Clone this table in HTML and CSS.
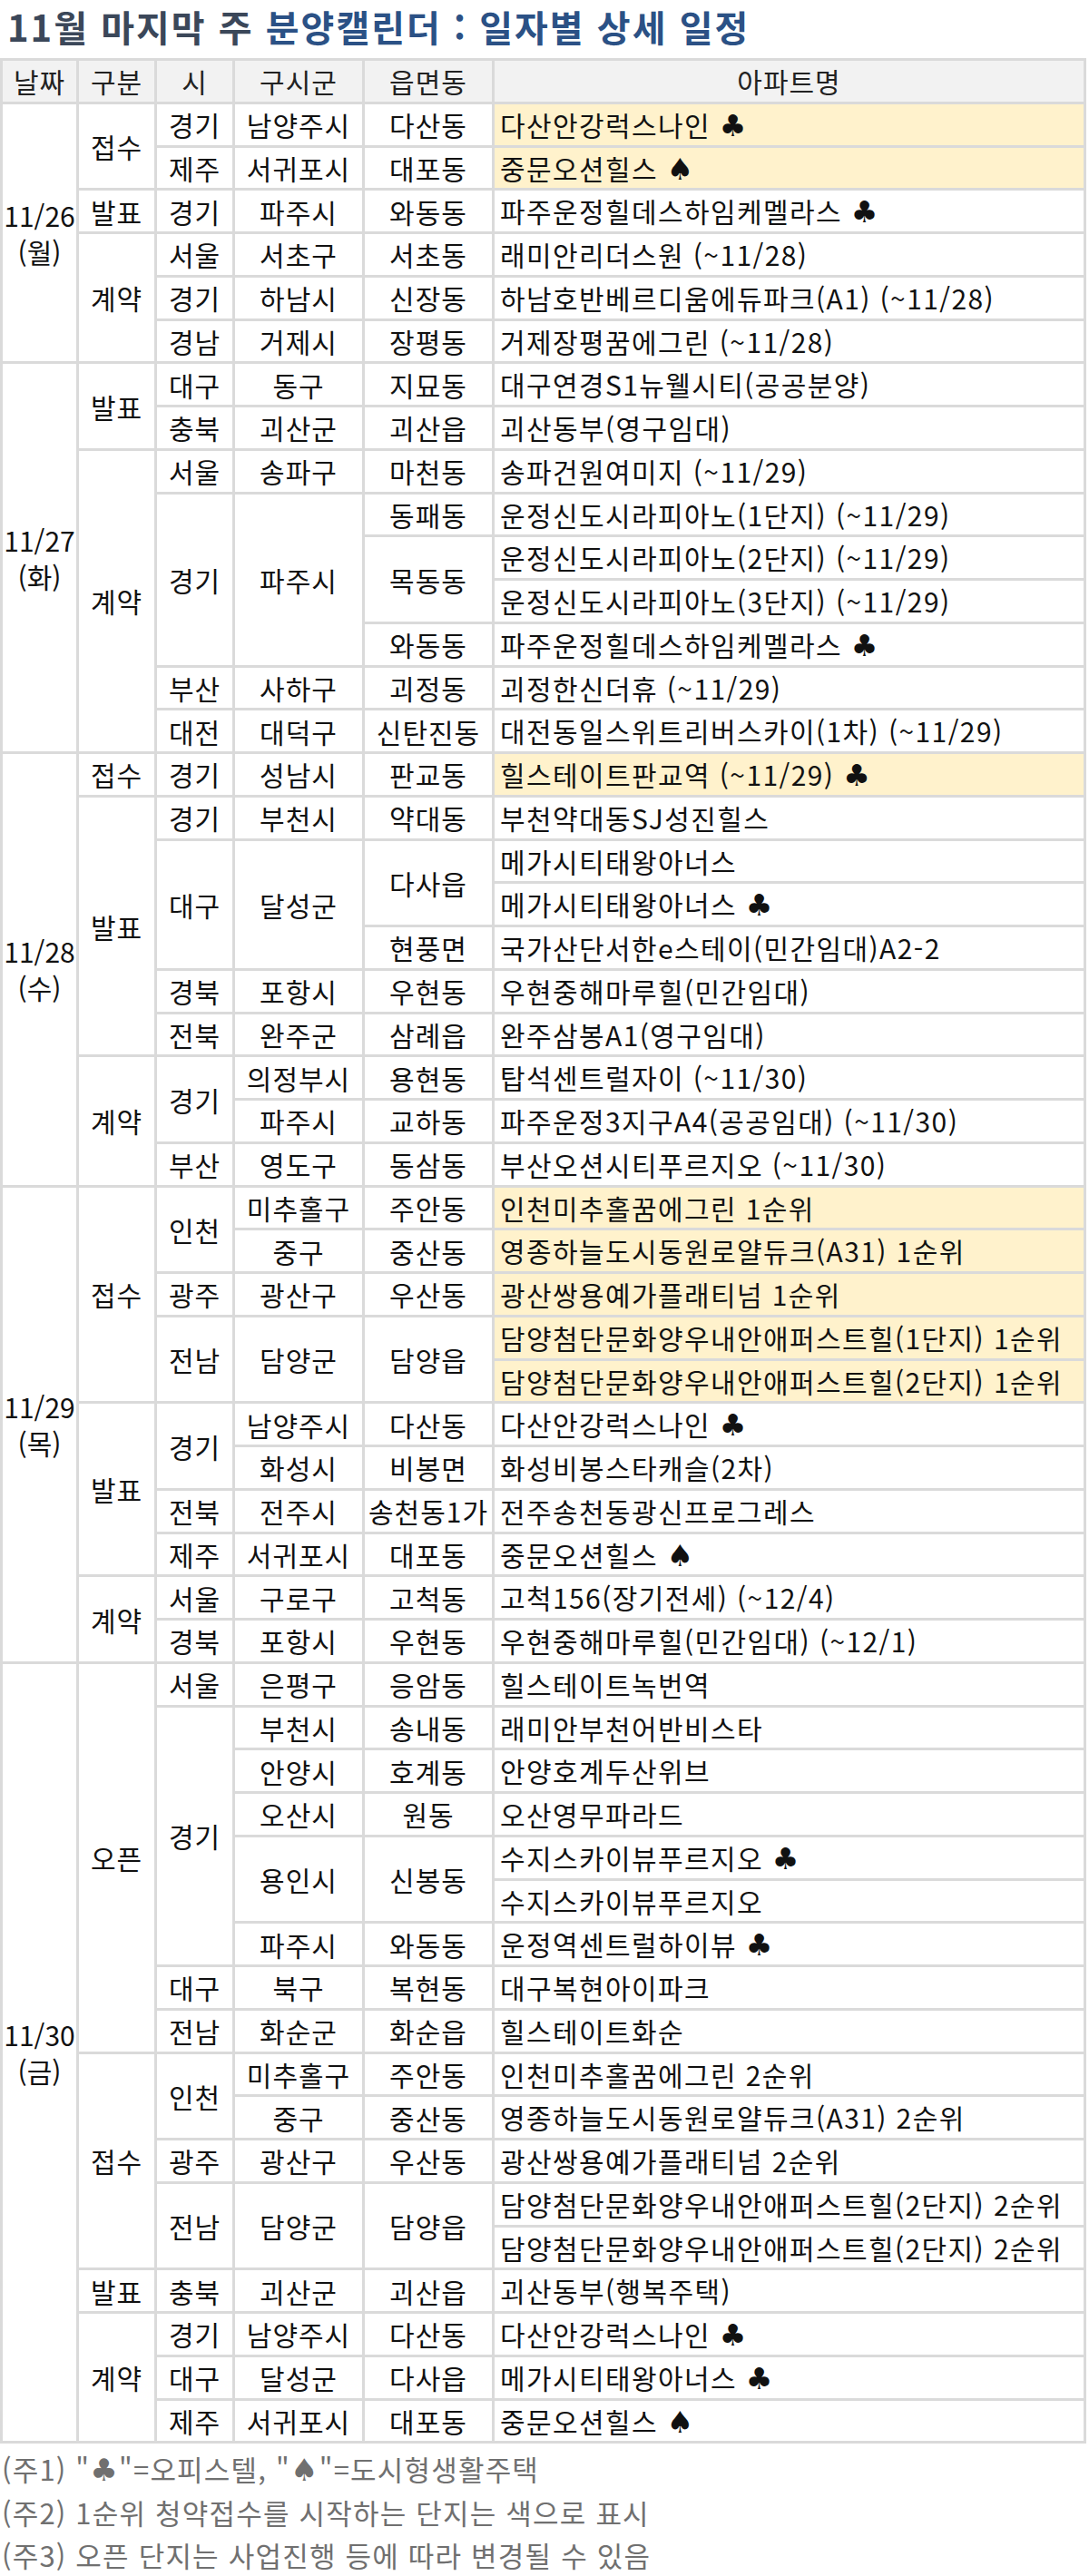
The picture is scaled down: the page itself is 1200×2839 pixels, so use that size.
FILE: index.html
```html
<!DOCTYPE html>
<html lang="ko">
<head>
<meta charset="utf-8">
<title>11월 마지막 주 분양캘린더</title>
<link rel="stylesheet" href="styles.css">
</head>
<body>
<h1 class="title">11월 마지막 주 <span class="accent">분양캘린더 : 일자별 상세 일정</span></h1>

<div class="sched">
  <div class="h">날짜</div><div class="h">구분</div><div class="h">시</div><div class="h">구시군</div><div class="h">읍면동</div><div class="h">아파트명</div>

  <div class="d s6"><span>11/26</span><span>(월)</span></div>
  <div class="s2">접수</div>
  <div>경기</div><div>남양주시</div><div>다산동</div><div class="n y">다산안강럭스나인 <span class="suit">♣</span></div>
  <div>제주</div><div>서귀포시</div><div>대포동</div><div class="n y">중문오션힐스 <span class="suit">♠</span></div>
  <div>발표</div><div>경기</div><div>파주시</div><div>와동동</div><div class="n">파주운정힐데스하임케멜라스 <span class="suit">♣</span></div>
  <div class="s3">계약</div>
  <div>서울</div><div>서초구</div><div>서초동</div><div class="n">래미안리더스원 (~11/28)</div>
  <div>경기</div><div>하남시</div><div>신장동</div><div class="n">하남호반베르디움에듀파크(A1) (~11/28)</div>
  <div>경남</div><div>거제시</div><div>장평동</div><div class="n">거제장평꿈에그린 (~11/28)</div>

  <div class="d s9"><span>11/27</span><span>(화)</span></div>
  <div class="s2">발표</div>
  <div>대구</div><div>동구</div><div>지묘동</div><div class="n">대구연경S1뉴웰시티(공공분양)</div>
  <div>충북</div><div>괴산군</div><div>괴산읍</div><div class="n">괴산동부(영구임대)</div>
  <div class="s7">계약</div>
  <div>서울</div><div>송파구</div><div>마천동</div><div class="n">송파건원여미지 (~11/29)</div>
  <div class="s4">경기</div><div class="s4">파주시</div><div>동패동</div><div class="n">운정신도시라피아노(1단지) (~11/29)</div>
  <div class="s2">목동동</div><div class="n">운정신도시라피아노(2단지) (~11/29)</div>
  <div class="n">운정신도시라피아노(3단지) (~11/29)</div>
  <div>와동동</div><div class="n">파주운정힐데스하임케멜라스 <span class="suit">♣</span></div>
  <div>부산</div><div>사하구</div><div>괴정동</div><div class="n">괴정한신더휴 (~11/29)</div>
  <div>대전</div><div>대덕구</div><div>신탄진동</div><div class="n">대전동일스위트리버스카이(1차) (~11/29)</div>

  <div class="d s10"><span>11/28</span><span>(수)</span></div>
  <div>접수</div><div>경기</div><div>성남시</div><div>판교동</div><div class="n y">힐스테이트판교역 (~11/29) <span class="suit">♣</span></div>
  <div class="s6">발표</div>
  <div>경기</div><div>부천시</div><div>약대동</div><div class="n">부천약대동SJ성진힐스</div>
  <div class="s3">대구</div><div class="s3">달성군</div><div class="s2">다사읍</div><div class="n">메가시티태왕아너스</div>
  <div class="n">메가시티태왕아너스 <span class="suit">♣</span></div>
  <div>현풍면</div><div class="n">국가산단서한e스테이(민간임대)A2-2</div>
  <div>경북</div><div>포항시</div><div>우현동</div><div class="n">우현중해마루힐(민간임대)</div>
  <div>전북</div><div>완주군</div><div>삼례읍</div><div class="n">완주삼봉A1(영구임대)</div>
  <div class="s3">계약</div>
  <div class="s2">경기</div><div>의정부시</div><div>용현동</div><div class="n">탑석센트럴자이 (~11/30)</div>
  <div>파주시</div><div>교하동</div><div class="n">파주운정3지구A4(공공임대) (~11/30)</div>
  <div>부산</div><div>영도구</div><div>동삼동</div><div class="n">부산오션시티푸르지오 (~11/30)</div>

  <div class="d s11"><span>11/29</span><span>(목)</span></div>
  <div class="s5">접수</div>
  <div class="s2">인천</div><div>미추홀구</div><div>주안동</div><div class="n y">인천미추홀꿈에그린 1순위</div>
  <div>중구</div><div>중산동</div><div class="n y">영종하늘도시동원로얄듀크(A31) 1순위</div>
  <div>광주</div><div>광산구</div><div>우산동</div><div class="n y">광산쌍용예가플래티넘 1순위</div>
  <div class="s2">전남</div><div class="s2">담양군</div><div class="s2">담양읍</div><div class="n y">담양첨단문화양우내안애퍼스트힐(1단지) 1순위</div>
  <div class="n y">담양첨단문화양우내안애퍼스트힐(2단지) 1순위</div>
  <div class="s4">발표</div>
  <div class="s2">경기</div><div>남양주시</div><div>다산동</div><div class="n">다산안강럭스나인 <span class="suit">♣</span></div>
  <div>화성시</div><div>비봉면</div><div class="n">화성비봉스타캐슬(2차)</div>
  <div>전북</div><div>전주시</div><div>송천동1가</div><div class="n">전주송천동광신프로그레스</div>
  <div>제주</div><div>서귀포시</div><div>대포동</div><div class="n">중문오션힐스 <span class="suit">♠</span></div>
  <div class="s2">계약</div>
  <div>서울</div><div>구로구</div><div>고척동</div><div class="n">고척156(장기전세) (~12/4)</div>
  <div>경북</div><div>포항시</div><div>우현동</div><div class="n">우현중해마루힐(민간임대) (~12/1)</div>

  <div class="d s18"><span>11/30</span><span>(금)</span></div>
  <div class="s9">오픈</div>
  <div>서울</div><div>은평구</div><div>응암동</div><div class="n">힐스테이트녹번역</div>
  <div class="s6">경기</div><div>부천시</div><div>송내동</div><div class="n">래미안부천어반비스타</div>
  <div>안양시</div><div>호계동</div><div class="n">안양호계두산위브</div>
  <div>오산시</div><div>원동</div><div class="n">오산영무파라드</div>
  <div class="s2">용인시</div><div class="s2">신봉동</div><div class="n">수지스카이뷰푸르지오 <span class="suit">♣</span></div>
  <div class="n">수지스카이뷰푸르지오</div>
  <div>파주시</div><div>와동동</div><div class="n">운정역센트럴하이뷰 <span class="suit">♣</span></div>
  <div>대구</div><div>북구</div><div>복현동</div><div class="n">대구복현아이파크</div>
  <div>전남</div><div>화순군</div><div>화순읍</div><div class="n">힐스테이트화순</div>
  <div class="s5">접수</div>
  <div class="s2">인천</div><div>미추홀구</div><div>주안동</div><div class="n">인천미추홀꿈에그린 2순위</div>
  <div>중구</div><div>중산동</div><div class="n">영종하늘도시동원로얄듀크(A31) 2순위</div>
  <div>광주</div><div>광산구</div><div>우산동</div><div class="n">광산쌍용예가플래티넘 2순위</div>
  <div class="s2">전남</div><div class="s2">담양군</div><div class="s2">담양읍</div><div class="n">담양첨단문화양우내안애퍼스트힐(2단지) 2순위</div>
  <div class="n">담양첨단문화양우내안애퍼스트힐(2단지) 2순위</div>
  <div>발표</div><div>충북</div><div>괴산군</div><div>괴산읍</div><div class="n">괴산동부(행복주택)</div>
  <div class="s3">계약</div>
  <div>경기</div><div>남양주시</div><div>다산동</div><div class="n">다산안강럭스나인 <span class="suit">♣</span></div>
  <div>대구</div><div>달성군</div><div>다사읍</div><div class="n">메가시티태왕아너스 <span class="suit">♣</span></div>
  <div>제주</div><div>서귀포시</div><div>대포동</div><div class="n">중문오션힐스 <span class="suit">♠</span></div>
</div>

<div class="notes">
  <p>(주1) "<span class="suit">♣</span>"=오피스텔, "<span class="suit">♠</span>"=도시형생활주택</p>
  <p>(주2) 1순위 청약접수를 시작하는 단지는 색으로 표시</p>
  <p>(주3) 오픈 단지는 사업진행 등에 따라 변경될 수 있음</p>
</div>
</body>
</html>
```

FILE: styles.css
```css
* { box-sizing: border-box; }

body {
  margin: 0;
  background: #ffffff;
  font-family: "Noto Sans CJK KR", "Noto Sans", sans-serif;
  color: #111111;
}

.title {
  margin: 0 0 6px;
  padding-left: 8px;
  font-size: 40px;
  line-height: 58px;
  font-weight: 700;
  letter-spacing: 2px;
  color: #3b4759;
  white-space: nowrap;
}

.title .accent { color: #2b5185; }

.sched {
  width: 1197px;
  display: grid;
  grid-template-columns: 81px 83px 83px 140px 140px 1fr;
  grid-auto-rows: 44.75px;
  gap: 3px;
  padding: 3px;
  background: #dadada;
  font-size: 30px;
  letter-spacing: 1px;
}

.sched > div {
  background: #ffffff;
  display: flex;
  align-items: center;
  justify-content: center;
  white-space: nowrap;
}

.sched > .h { background: #f2f2f2; color: #222222; }

.sched > .n {
  display: block;
  padding-left: 6px;
  line-height: 44.75px;
  letter-spacing: 1.4px;
}

.sched > .y { background: #fff2cc; }

.sched > .d {
  flex-direction: column;
  line-height: 40px;
  letter-spacing: 0;
}

.s2 { grid-row: span 2; }
.s3 { grid-row: span 3; }
.s4 { grid-row: span 4; }
.s5 { grid-row: span 5; }
.s6 { grid-row: span 6; }
.s7 { grid-row: span 7; }
.s9 { grid-row: span 9; }
.s10 { grid-row: span 10; }
.s11 { grid-row: span 11; }
.s18 { grid-row: span 18; }

.suit {
  font-family: "DejaVu Sans", sans-serif;
  font-size: 1.1em;
  line-height: 1;
}

.notes {
  margin-top: 4px;
  padding-left: 2px;
  font-size: 31px;
  line-height: 47.5px;
  letter-spacing: 1.2px;
  color: #707070;
}

.notes p { margin: 0; }
```
